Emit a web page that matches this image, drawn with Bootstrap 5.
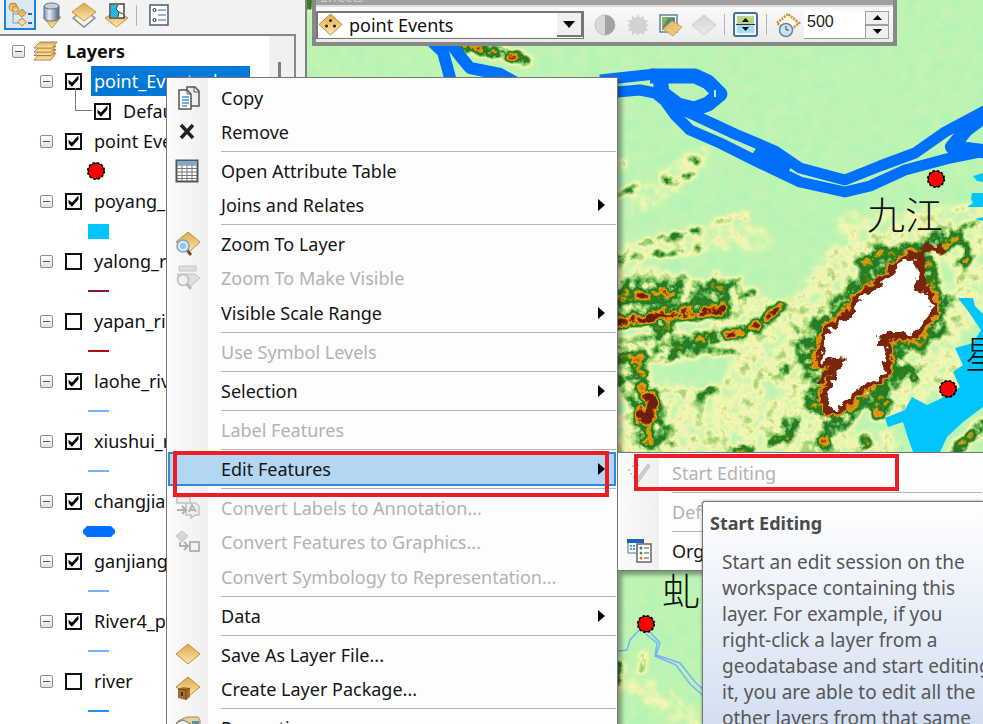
<!DOCTYPE html>
<html lang="en">
<head>
<meta charset="utf-8">
<meta name="viewport" content="width=device-width, initial-scale=1">
<title>Layers</title>
<link rel="stylesheet" href="https://cdn.jsdelivr.net/npm/bootstrap@5.3.0/dist/css/bootstrap.min.css">
<style>
  :root { --ui: "Noto Sans", "Open Sans", sans-serif; }
  body { font: 18px/30px var(--ui); color: #111; background: #f2f2f2; }
  svg { display: block; flex: none; }
  .side { width: 305px; flex: none; }
  .side-tools { height: 34px; padding: 0 0 4px 4px; }
  .tool { width: 33px; height: 30px; border: 0; padding: 0; background: none; display: flex; align-items: center; justify-content: center; flex: none; }
  .tool.on { background: #d9e8f7; border: 2px solid #1883d7; border-top: 0; }
  .side-tools .tool { width: 32px; }
  .rule { width: 1px; height: 21px; background: #b4b4b4; flex: none; }
  .toc { margin-right: 9px; border: 2px solid #828790; border-left: 0; border-bottom: 0; background: #fff; overflow: hidden; }
  .track { width: 25px; background: #f0f0f0; padding: 26px 0 0 9px; }
  .track span { display: block; width: 3px; height: 100%; background: #7d7d7d; }
  .tree li { height: 30px; display: flex; align-items: center; white-space: nowrap; }
  .tree .root { padding-left: 12px; }
  .lvl { padding-left: 40px; }
  .sub { padding-left: 75px; }
  .sym { padding-left: 88px; }
  .wide { margin-left: -5px; }
  .fold { width: 13px; height: 13px; border: 1px solid #8e8e8e; border-radius: 2px; background: linear-gradient(#fff, #e0e0e0); padding: 0; display: flex; align-items: center; justify-content: center; flex: none; }
  .fold::after { content: ""; width: 7px; height: 1px; background: #33509a; }
  .tick { appearance: none; width: 17px; height: 17px; border: 2px solid #111; background: #fff; margin: 0; flex: none; }
  .tick:checked::before { content: ""; display: block; width: 13px; height: 13px; background: #000; clip-path: polygon(12% 40%, 38% 62%, 88% 8%, 88% 38%, 38% 94%, 12% 68%); }
  .lvl .tick { margin: 0 12px 0 12px; }
  .sub .tick { margin: 0 12px 0 2px; }
  .lvl .picked { background: #0078d7; color: #fff; padding: 0 10px 0 3px; margin-left: -3px; width: 159px; }
  .elbow { width: 17px; height: 23px; border: solid #7a7a7a; border-width: 0 0 1px 1px; margin-top: -23px; flex: none; }
  .line { width: 21px; height: 2px; }
  .c-wine { background: #8c1448; } .c-red { background: #b40a14; } .c-sky { background: #73b2ff; } .c-blue { background: #1e96ff; }
  .mapview { border-left: 2px solid #808080; min-width: 0; }
  .map { width: 100%; height: 100%; }
  .effects { top: -15px; left: 5px; width: 585px; border: 4px solid #888; background: #a0a0a0; }
  .effects h2 { font: 14px/16px var(--ui); color: #d0d0d0; margin: 0; padding: 0 4px; height: 16px; }
  .effects-bar { background: linear-gradient(#fafafa, #ebebeb); height: 37px; border-top: 2px solid #ddd; }
  .well { border: solid #777; border-width: 2px 1px 1px 2px; background: #fff; width: 268px; height: 28px; flex: none; }
  .well select { appearance: none; border: 0; background: none; font: 18px/22px var(--ui); padding: 0 0 0 6px; min-width: 0; color: #111; }
  .arrow { width: 26px; height: 24px; background: #f0f0f0; border: solid #777; border-width: 0 2px 2px 0; }
  .amount { width: 61px; height: 28px; border: 0; border-bottom: 1px solid #999; padding: 0 0 4px 3px; font: 16px/20px "Liberation Sans", Arial, sans-serif; color: #222; }
  .spin { width: 24px; }
  .spin button { height: 14px; border: 1px solid #a0a0a0; background: #f0f0f0; padding: 0; display: flex; align-items: center; justify-content: center; }
  .menu { position: absolute; display: block; border: 1px solid #777; padding: 3px 1px 2px; color: #111;
    background: linear-gradient(90deg, #fcfcfc, #efefef 41px, #fdfdfd 41px); box-shadow: 4px 4px 4px rgba(0,0,0,.35); }
  .menu .item { height: 34px; width: 100%; border: 1px solid transparent; background: none; padding: 0 10px 0 6px; display: flex; align-items: center; color: #151515; text-align: left; white-space: nowrap; line-height: 32px; }
  .menu .item:disabled { color: #b3b3b3; }
  .menu .item.hot { background: #b3d6f2; border: 2px solid #2b8bdc; padding: 0 9px 0 5px; }
  .glyph { width: 26px; margin-right: 20px; flex: none; }
  .menu hr { margin: 2px 0 2px 53px; border: 0; border-top: 1px solid #b5b5b5; opacity: 1; }
  .trio { display: grid; gap: 1px; }
  .layer-menu { left: 166px; top: 77px; width: 452px; }
  .edit-menu { left: 617px; top: 452px; right: 0; border-right: 0; overflow: hidden; }
  .hint { left: 702px; top: 501px; right: 0; bottom: 0; border: 1px solid #767676; border-width: 1px 0 0 1px; border-radius: 3px 0 0 0; background: linear-gradient(#fff, #c9d8ee 270px); color: #575757; padding: 8px 0 0 7px; box-shadow: 0 0 3px rgba(0,0,0,.4); overflow: hidden; }
  .hint h3 { font: 700 18px/26px var(--ui); color: #4b4b4b; margin: 0 0 13px; }
  .hint p { font-size: 19px; line-height: 26px; padding-left: 12px; margin: 0; white-space: nowrap; }
  .callout { border: 4px solid #ee1c25; pointer-events: none; }
  .call-a { left: 173px; top: 451px; width: 436px; height: 46px; }
  .call-b { left: 634px; top: 454px; width: 265px; height: 37px; }
  .place { font-family: "Noto Sans CJK SC", sans-serif; font-weight: 300; font-size: 38px; fill: #111; }
</style>
</head>
<body class="overflow-hidden vh-100 position-relative">
<svg width="0" height="0" class="position-absolute" aria-hidden="true">
  <defs>
    <linearGradient id="gold" x1="0" y1="0" x2="0" y2="1"><stop offset="0" stop-color="#e0a84a"/><stop offset="1" stop-color="#fbe8b0"/></linearGradient>
    <linearGradient id="steel" x1="0" y1="0" x2="1" y2="0"><stop offset="0" stop-color="#7d8ca6"/><stop offset=".35" stop-color="#e6ecf5"/><stop offset="1" stop-color="#53617c"/></linearGradient>
    <linearGradient id="pale" x1="0" y1="0" x2="0" y2="1"><stop offset="0" stop-color="#d2d2d2"/><stop offset="1" stop-color="#ececec"/></linearGradient>
    <symbol id="pin" viewBox="0 0 20 20"><circle cx="10" cy="10" r="8.3" fill="#000" stroke="#000" stroke-width="1.6" stroke-dasharray="2.6 1.8"/><circle cx="10" cy="10" r="7.3" fill="#f00"/></symbol>
  </defs>
</svg>

<div class="d-flex h-100">
  <aside class="side d-flex flex-column">
    <div class="side-tools d-flex align-items-center">
      <button class="tool on" aria-label="List by drawing order"><svg width="28" height="28" viewBox="0 0 28 28"><path d="M7 10v13h8M7 14h8" fill="none" stroke="#999"/><g fill="url(#gold)" stroke="#b98a3d"><circle cx="7" cy="7" r="4"/><circle cx="9.500" cy="9" r="3"/><path d="M16 9l4.500 4-4.500 4-4.500-4zM16 18l4.500 4-4.500 4-4.500-4z"/></g><path d="M22 14h4M22 23h4" stroke="#33679f" stroke-width="2"/></svg></button>
      <button class="tool" aria-label="List by source"><svg width="22" height="27" viewBox="0 0 22 27"><path d="M2 15h18l-9 11z" fill="url(#gold)" stroke="#c49a52"/><path d="M3 4v12c0 4 15 4 15 0V4" fill="url(#steel)" stroke="#65718a"/><ellipse cx="10.500" cy="4" rx="7.500" ry="3" fill="#c4cede" stroke="#65718a"/></svg></button>
      <button class="tool" aria-label="List by visibility"><svg width="26" height="27" viewBox="0 0 26 27"><path d="M2 16l11-8 11 8-11 9z" fill="#f4f4f4" stroke="#8b8b8b" stroke-width="1.500"/><path d="M1 10l12-9 12 9-12 9z" fill="url(#gold)" stroke="#c0924a"/></svg></button>
      <button class="tool" aria-label="List by selection"><svg width="25" height="27" viewBox="0 0 25 27"><path d="M1 16l11.500-7L24 16l-11.500 9z" fill="url(#gold)" stroke="#c0924a"/><path d="M6 2h14v14H6z" fill="#fff" stroke="#444" stroke-width="1.500"/><path d="M7 3h7l-2 4 3 3-1 5H7z" fill="#1fb9e4"/><path d="M14 3l-2 4 3 3-1 5M15 10l4 2" fill="none" stroke="#444"/></svg></button>
      <span class="rule ms-1 me-2"></span>
      <button class="tool ms-1 w-auto" aria-label="Options"><svg width="20" height="22" viewBox="0 0 20 22"><path d="M1 1h18v20H1z" fill="#fff" stroke="#4d5a7c" stroke-width="1.500"/><circle cx="5.500" cy="6" r="1.500" fill="none" stroke="#222"/><circle cx="5.500" cy="16" r="1.500" fill="none" stroke="#222"/><path d="M9 6h8M9 11h8M9 16h8" stroke="#8490ad" stroke-width="1.500"/></svg></button>
    </div>
    <div class="toc d-flex flex-grow-1">
      <ul class="tree list-unstyled m-0 flex-grow-1 overflow-hidden">
        <li class="root fw-bold"><button class="fold" aria-label="Collapse"></button><svg class="ms-2 me-2" width="25" height="20" viewBox="0 0 25 20"><g fill="url(#gold)" stroke="#9c6c24" stroke-width=".8"><path d="M7 12h16l-5 7H1z"/><path d="M7 8.500h16l-5 6H1z"/><path d="M7 5h16l-5 6H1z"/><path d="M7 1h17l-5 6H1z"/></g></svg>Layers</li>
        <li class="lvl"><button class="fold" aria-label="Collapse"></button><input class="tick" type="checkbox" id="l1" checked><label class="picked" for="l1">point_Events dx</label></li>
        <li class="sub"><span class="elbow"></span><input class="tick" type="checkbox" id="l2" checked><label for="l2">Default</label></li>
        <li class="lvl"><button class="fold" aria-label="Collapse"></button><input class="tick" type="checkbox" id="l3" checked><label for="l3">point Events</label></li>
        <li class="sym"><svg width="20" height="20" viewBox="2 0 20 20" overflow="visible"><use href="#pin" width="20" height="20"/></svg></li>
        <li class="lvl"><button class="fold" aria-label="Collapse"></button><input class="tick" type="checkbox" id="l4" checked><label for="l4">poyang_lake</label></li>
        <li class="sym"><svg width="21" height="15"><rect width="21" height="15" fill="#00c5ff"/></svg></li>
        <li class="lvl"><button class="fold" aria-label="Collapse"></button><input class="tick" type="checkbox" id="l5"><label for="l5">yalong_river</label></li>
        <li class="sym"><span class="line c-wine"></span></li>
        <li class="lvl"><button class="fold" aria-label="Collapse"></button><input class="tick" type="checkbox" id="l6"><label for="l6">yapan_river</label></li>
        <li class="sym"><span class="line c-red"></span></li>
        <li class="lvl"><button class="fold" aria-label="Collapse"></button><input class="tick" type="checkbox" id="l7" checked><label for="l7">laohe_river</label></li>
        <li class="sym"><span class="line c-sky"></span></li>
        <li class="lvl"><button class="fold" aria-label="Collapse"></button><input class="tick" type="checkbox" id="l8" checked><label for="l8">xiushui_river</label></li>
        <li class="sym"><span class="line c-sky"></span></li>
        <li class="lvl"><button class="fold" aria-label="Collapse"></button><input class="tick" type="checkbox" id="l9" checked><label for="l9">changjiang</label></li>
        <li class="sym"><svg class="wide" width="32" height="11"><path d="M4 0h24l4 4v3l-4 4H4L0 7V4z" fill="#0070ff"/></svg></li>
        <li class="lvl"><button class="fold" aria-label="Collapse"></button><input class="tick" type="checkbox" id="l10" checked><label for="l10">ganjiang</label></li>
        <li class="sym"><span class="line c-sky"></span></li>
        <li class="lvl"><button class="fold" aria-label="Collapse"></button><input class="tick" type="checkbox" id="l11" checked><label for="l11">River4_polyline</label></li>
        <li class="sym"><span class="line c-sky"></span></li>
        <li class="lvl"><button class="fold" aria-label="Collapse"></button><input class="tick" type="checkbox" id="l12"><label for="l12">river</label></li>
        <li class="sym"><span class="line c-blue"></span></li>
      </ul>
      <div class="track"><span></span></div>
    </div>
  </aside>

  <main class="mapview flex-grow-1 position-relative overflow-hidden">
    <svg class="map" viewBox="307 0 676 724" preserveAspectRatio="xMinYMin slice" role="img" aria-label="Elevation map">
      <defs>
        <filter id="relief" filterUnits="userSpaceOnUse" x="307" y="0" width="676" height="724" color-interpolation-filters="sRGB">
          <feGaussianBlur in="SourceGraphic" stdDeviation="3" result="e"/>
          <feTurbulence type="fractalNoise" baseFrequency=".085" numOctaves="5" seed="8"/>
          <feColorMatrix values="1.900 0 0 0 -.45  1.900 0 0 0 -.45  1.900 0 0 0 -.45  0 0 0 0 1" result="n"/>
          <feComposite in="e" in2="n" operator="arithmetic" k1="1.100" k2=".5" k3=".03" k4=".01"/>
          <feComponentTransfer>
            <feFuncR type="table" tableValues=".68 .78 .97 .55 .12 .20 .88 .90 .55 .42 .42"/>
            <feFuncG type="table" tableValues=".96 .96 .97 .80 .48 .50 .64 .52 .18 .12 .12"/>
            <feFuncB type="table" tableValues=".72 .69 .70 .40 .16 .10 .06 .02 .02 .04 .08"/>
            <feFuncA type="linear" slope="0" intercept="1"/>
          </feComponentTransfer>
        </filter>
        <filter id="jag" filterUnits="userSpaceOnUse" x="780" y="230" width="203" height="200">
          <feTurbulence type="fractalNoise" baseFrequency=".13" numOctaves="2" seed="3"/>
          <feDisplacementMap in="SourceGraphic" scale="13" xChannelSelector="R" yChannelSelector="G"/>
        </filter>
        <path id="summit" d="M912 261L915 270 911 290 925 295 929 310 920 323 911 331 893 330 876 337 875 347 884 350 882 363 880 373 863 383 850 393 835 407 828 400 832 390 840 373 850 357 837 355 823 360 828 343 833 330 853 318 858 305 877 290 893 278 900 268z"/>
      </defs>
      <g filter="url(#relief)" fill="none" stroke-linecap="round" stroke-linejoin="round">
        <path d="M307 0h676v724H307z" fill="#080808" stroke="none"/>
        <g stroke="#1c1c1c" stroke-width="26"><path d="M617 260Q700 230 760 240M700 160L640 200M617 670L690 720M850 225L983 215"/></g>
        <path d="M617 280L760 320 740 400 617 440M680 400L700 450M720 440L800 410 790 330 850 260 960 230 975 270M940 330L975 290M890 400L940 360M800 450H880M960 390L930 350" stroke="#262626" stroke-width="44"/>
        <path d="M617 300L730 292M617 350L690 345M625 375L660 440" stroke="#444" stroke-width="28"/>
        <g stroke="#5c5c5c" stroke-width="7"><path d="M622 282L730 290M680 350L735 352M620 355L675 360M690 290l-8-14M712 290l4-16M730 290l8-10M740 300l16-8M796 330L805 375M800 420L770 445M925 240L975 225M770 375l20-8M700 395l15-6"/></g>
        <g stroke="#787878" stroke-width="4"><path d="M640 243L665 238 700 229M652 255L700 250M612 257L638 257M716 222L748 215M612 196L638 186M662 182L693 176M690 163L698 160M617 161L624 164M702 398L714 388M643 655v15"/></g>
        <g stroke="#8a8a8a" stroke-width="7"><path d="M617 665v16M866 440v8"/></g>
        <path d="M610 326Q650 313 725 311" stroke="#d4d4d4" stroke-width="11"/>
        <path d="M617 297L675 292M655 328L672 328" stroke="#b4b4b4" stroke-width="6"/>
        <path d="M698 338Q757 338 782 303" stroke="#a4a4a4" stroke-width="9"/>
        <path d="M636 365L650 395 646 440" stroke="#747474" stroke-width="18"/>
        <path d="M650 402L643 420" stroke="#e0e0e0" stroke-width="17"/>
        <g stroke="#505050" fill="#505050"><use href="#summit" stroke-width="48"/></g>
        <g stroke="#7c7c7c" fill="#7c7c7c"><use href="#summit" stroke-width="26"/></g>
        <path d="M862 262L880 250M920 255L955 240M965 250v14M912 372v4" stroke="#727272" stroke-width="12"/>
        <path d="M885 402L877 414M828 436L820 450M783 440L785 428" stroke="#8c8c8c" stroke-width="11"/>
        <path d="M983 425L955 452M735 452h15" stroke="#646464" stroke-width="13"/>
        <path d="M465 46L495 52 525 60" stroke="#909090" stroke-width="11"/>
        <path d="M307 0v6" stroke="#aaa" stroke-width="8"/>
      </g>
      <g filter="url(#jag)" stroke-linejoin="round">
        <use href="#summit" fill="none" stroke="#e08a10" stroke-width="21"/>
        <use href="#summit" fill="none" stroke="#7a2808" stroke-width="16"/>
        <path d="M912 258L928 248 945 250M922 250L924 290 936 316" fill="none" stroke="#7a2808" stroke-width="8"/>
        <use href="#summit" fill="#fff" stroke="#fff" stroke-width="5"/>
        <path d="M818 382L838 362" stroke="#7a2808" stroke-width="6"/>
      </g>
      <g fill="#00c5ff">
        <path d="M958 298h15l2 8 8 8v93l-20 15-16 15-7 15h-27l-5-14-5-16-15 5-3-9 20-8 7-13 15 8 11-5 22-13-7-15 10-7-8-17 18-5 8-13-13-19z"/>
        <path d="M983 173l-10 3 4 5 6 1zM983 193h-11l-1 6 2 4-6 4h16zM983 217l-8 2 8 2z"/>
      </g>
      <g fill="none" stroke="#0070ff" stroke-width="11" stroke-linejoin="round">
        <path d="M424 34L443 52 452 85" stroke-width="12"/>
        <path d="M448 40L460 56 470 68 500 74 520 85" stroke-width="12"/>
        <path d="M600 80L655 74"/>
        <path d="M650 76L695 76 708 82 720 94 708 104 694 109 678 105 662 93 660 78" stroke-width="15"/>
        <path d="M617 92L640 90 655 93 665 101 675 115 690 130 720 143 760 163 800 182 845 192 870 186 905 170 950 158 990 150"/>
        <path d="M670 104L692 114 735 134 775 151 800 168 845 180 880 166 915 153 945 132 990 108"/>
        <path d="M755 150L788 172" stroke-width="17"/>
        <path d="M990 112L966 130 952 147 990 152" stroke-width="14"/>
      </g>
      <path d="M715 90v7" stroke="#b4f5b0" stroke-width="2"/>
      <path d="M617 651L627 650 630 640 640 629M650 632L660 643 656 655 680 663 695 682 712 698M646 634L657 643 655 656 676 665 690 684 708 700" fill="none" stroke="#73b2ff" stroke-width="1.500"/>
      <use href="#pin" x="926" y="169" width="20" height="20"/>
      <use href="#pin" x="938" y="379" width="20" height="20"/>
      <use href="#pin" x="636" y="614" width="20" height="20"/>
      <text class="place" x="867" y="229">九江</text>
      <text class="place" x="965" y="368">星</text>
      <text class="place" x="662" y="605">虬</text>
    </svg>

    <section class="effects position-absolute">
      <h2>Effects</h2>
      <div class="effects-bar d-flex align-items-center">
        <div class="well d-flex align-items-center">
          <svg width="25" height="24" viewBox="0 0 25 24"><path d="M1 11.500L12.500 1 24 11.500 12.500 22z" fill="url(#gold)" stroke="#b88a43"/><g fill="#222"><circle cx="12.500" cy="7.500" r="1.500"/><circle cx="8.500" cy="13" r="1.500"/><circle cx="16.500" cy="13" r="1.500"/></g></svg>
          <select class="flex-grow-1" aria-label="Layer"><option>point Events</option></select>
          <span class="arrow d-flex align-items-center justify-content-center"><svg width="12" height="7"><path d="M0 0h12L6 7z"/></svg></span>
        </div>
        <button class="tool ms-1" aria-label="Contrast"><svg width="22" height="22" viewBox="0 0 22 22"><circle cx="11" cy="11" r="10" fill="#d9d9d9" stroke="#c4c4c4"/><path d="M11 1a10 10 0 010 20z" fill="#a3a3a3"/></svg></button>
        <button class="tool" aria-label="Brightness"><svg width="22" height="22" viewBox="0 0 22 22"><path fill="#d2d2d2" d="M11 0l2 4 4-2 0 4 4 0-2 4 3 1-3 2 2 4h-4v4l-4-2-2 3-2-3-4 2v-4H1l2-4-3-2 3-1-2-4h4V2l4 2z"/></svg></button>
        <button class="tool" aria-label="Transparency"><svg width="25" height="24" viewBox="0 0 25 24"><path d="M2 2h17v17H2z" fill="#fff" stroke="#62809e" stroke-width="1.500"/><path d="M4 4h13v13H4z" fill="#8fb05a"/><path d="M5 14l5-9h7v4l-9 8H4z" fill="#4a8a82"/><path d="M5 16L14 8l10 6-9 9z" fill="#f1c572" fill-opacity=".9" stroke="#d09b48"/></svg></button>
        <button class="tool" aria-label="Dim"><svg width="26" height="22" viewBox="0 0 26 22"><path d="M1 11L13 1l12 10-12 10z" fill="url(#pale)" stroke="#cdcdcd"/></svg></button>
        <span class="rule ms-1"></span>
        <button class="tool ms-1" aria-label="Swipe layer"><svg width="25" height="25" viewBox="0 0 25 25"><rect x="1" y="1" width="23" height="23" rx="2" fill="#eef6fb" stroke="#4a6f96" stroke-width="2"/><path d="M4 4h17v8H4z" fill="#bcd488"/><path d="M4 13h17v8H4z" fill="#a5dbf3"/><path d="M3 12.500h19" stroke="#333"/><path d="M9 10h7l-3.500-4zM9 15h7l-3.500 4z"/></svg></button>
        <span class="rule ms-1"></span>
        <button class="tool ms-1" aria-label="Flicker layer"><svg width="26" height="26" viewBox="0 0 26 26"><path d="M2 11L13 2l11 9-11 9z" fill="#fff8e4" stroke="#d09038" stroke-width="2.500" stroke-dasharray="2 1"/><circle cx="11" cy="18" r="6.500" fill="#c9e5f5" stroke="#6687a4" stroke-width="1.500"/><path d="M11 14v4h3" fill="none" stroke="#345"/></svg></button>
        <input class="amount" value="500" aria-label="Flicker rate">
        <div class="spin d-flex flex-column">
          <button aria-label="Increase"><svg width="9" height="5"><path d="M0 5h9L4.500 0z"/></svg></button>
          <button aria-label="Decrease"><svg width="9" height="5"><path d="M0 0h9L4.500 5z"/></svg></button>
        </div>
      </div>
    </section>
  </main>
</div>

<nav class="menu layer-menu" aria-label="Layer menu">
  <button class="item"><span class="glyph"><svg width="26" height="26" viewBox="0 0 26 26"><path d="M12 2h8l4 4v15H12z" fill="#eee" stroke="#555" stroke-width="1.500"/><path d="M19 2v5h5" fill="none" stroke="#555"/><path d="M4 5h8l4 4v15H4z" fill="#fff" stroke="#555" stroke-width="1.500"/><path d="M12 5v4h4" fill="none" stroke="#555"/><path d="M7 12h7M7 15h7M7 18h7M7 21h5" stroke="#4a90d6" stroke-width="1.500"/></svg></span>Copy</button>
  <button class="item"><span class="glyph"><svg width="26" height="26" viewBox="0 0 26 26"><path d="M6 6l12 13M18 6L6 19" stroke="#222" stroke-width="3.500"/></svg></span>Remove</button>
  <hr>
  <button class="item"><span class="glyph"><svg width="24" height="24" viewBox="0 0 24 24"><path d="M1.500 1.500h21v21h-21z" fill="#fff" stroke="#555" stroke-width="2"/><path d="M2.500 2.500h19v3h-19z" fill="#62b1ea"/><path d="M2 6h20M2 9.500h20M2 13h20M2 16.500h20M2 19.500h20M7 6v16M12 6v16M17 6v16" stroke="#777"/></svg></span>Open Attribute Table</button>
  <button class="item"><span class="glyph"></span>Joins and Relates<svg class="ms-auto" width="7" height="12"><path d="M0 0l7 6-7 6z"/></svg></button>
  <hr>
  <button class="item"><span class="glyph"><svg width="26" height="26" viewBox="0 0 26 26"><path d="M1 11L13 1l12 10-11 10z" fill="url(#gold)" stroke="#c18c3c"/><path d="M12 19l4 5" stroke="#7c4b31" stroke-width="3"/><circle cx="8" cy="15" r="6" fill="#d3ebfb" stroke="#7ba3cc" stroke-width="1.500"/><circle cx="8" cy="15" r="3" fill="#8ec4ef"/></svg></span>Zoom To Layer</button>
  <div class="trio">
  <button class="item" disabled><span class="glyph"><svg width="26" height="26" viewBox="0 0 26 26"><path d="M4 1h17v5H4zM2 9h18l5 4-10 9z" fill="#dedede" stroke="#c4c4c4"/><path d="M12 19l4 5" stroke="#bbb" stroke-width="3"/><circle cx="8" cy="15" r="5.500" fill="#f0f0f0" stroke="#bcbcbc" stroke-width="1.500"/></svg></span>Zoom To Make Visible</button>
  <button class="item"><span class="glyph"></span>Visible Scale Range<svg class="ms-auto" width="7" height="12"><path d="M0 0l7 6-7 6z"/></svg></button>
  </div>
  <hr>
  <button class="item" disabled><span class="glyph"></span>Use Symbol Levels</button>
  <hr>
  <button class="item"><span class="glyph"></span>Selection<svg class="ms-auto" width="7" height="12"><path d="M0 0l7 6-7 6z"/></svg></button>
  <hr>
  <button class="item" disabled><span class="glyph"></span>Label Features</button>
  <hr>
  <button class="item hot"><span class="glyph"></span>Edit Features<svg class="ms-auto" width="7" height="12"><path d="M0 0l7 6-7 6z"/></svg></button>
  <hr>
  <button class="item" disabled><span class="glyph"><svg width="26" height="26" viewBox="0 0 26 26"><path d="M2 2h13v6H2zM11 8h9l4 3v9h-4l-4 3v-3h-5z" fill="#eee" stroke="#c2c2c2" stroke-width="1.500"/><path d="M2 15h8M7 11l4 4-4 4" fill="none" stroke="#b0b0b0" stroke-width="2"/><path d="M14 17l3-7 4 7M15 15h5" fill="none" stroke="#aaa" stroke-width="1.500"/></svg></span>Convert Labels to Annotation...</button>
  <div class="trio">
  <button class="item" disabled><span class="glyph"><svg width="26" height="26" viewBox="0 0 26 26"><path d="M1 7l6-5 6 5-6 6z" fill="#d8d8d8" stroke="#c4c4c4"/><path d="M5 13v4h7M9 13l4 4-4 4" fill="none" stroke="#b0b0b0" stroke-width="2"/><path d="M15 13h9v9h-9z" fill="#f2f2f2" stroke="#b5b5b5" stroke-width="2"/></svg></span>Convert Features to Graphics...</button>
  <button class="item" disabled><span class="glyph"></span>Convert Symbology to Representation...</button>
  </div>
  <hr>
  <button class="item"><span class="glyph"></span>Data<svg class="ms-auto" width="7" height="12"><path d="M0 0l7 6-7 6z"/></svg></button>
  <hr>
  <button class="item"><span class="glyph"><svg width="26" height="26" viewBox="0 0 26 26"><path d="M1 12L13 2l12 10-12 10z" fill="url(#gold)" stroke="#c18c3c"/></svg></span>Save As Layer File...</button>
  <button class="item"><span class="glyph"><svg width="26" height="26" viewBox="0 0 26 26"><path d="M1 11L13 1l12 10-12 10z" fill="url(#gold)" stroke="#c18c3c"/><path d="M3 13l5-2 7 1v9l-4 3-8-2z" fill="#a7702a"/><path d="M3 13l8 1 4-2M11 14v10" fill="none" stroke="#6d441a"/><path d="M6 16h2v4H6z" fill="#4c2d10"/></svg></span>Create Layer Package...</button>
  <hr>
  <button class="item"><span class="glyph"><svg width="26" height="26" viewBox="0 0 26 26"><path d="M3 6l9-4h11l2 3v18H3z" fill="#e8cf95" stroke="#a18a5a"/><path d="M1 8l7-3 8 4-6 5z" fill="#edf1f2" stroke="#777"/><path d="M17 6h7v16h-7z" fill="#5f8f9f"/></svg></span>Properties...</button>
</nav>

<nav class="menu edit-menu" aria-label="Edit Features">
  <button class="item" disabled><span class="glyph"><svg width="26" height="26" viewBox="0 0 26 26"><path d="M9 21L22 4l2 2-12 17z" fill="#d0d0d0" stroke="#bdbdbd"/><path d="M2 10h2M6 6h2M8 10h2M4 14h2M10 13h2M7 17h2M11 5h2" stroke="#c9c9c9" stroke-width="2"/></svg></span>Start Editing</button>
  <hr>
  <button class="item" disabled><span class="glyph"></span>Define New Types Of Features...</button>
  <hr>
  <button class="item"><span class="glyph"><svg width="26" height="26" viewBox="0 0 26 26"><path d="M2 2h15v13H2z" fill="#fff" stroke="#577"/><path d="M1 1h17v4H1z" fill="#1766b8"/><path d="M4 8h12M4 11h12" stroke="#5d9ed8" stroke-width="2" stroke-dasharray="2 1"/><path d="M11 6h14v18H11z" fill="#fff" stroke="#666" stroke-width="1.500"/><circle cx="15" cy="10" r="1.500" fill="#2676c4"/><circle cx="15" cy="15" r="1.500" fill="#2d9a35"/><circle cx="15" cy="20" r="1.500" fill="#d57a18"/><path d="M18 10h5M18 15h5M18 20h5" stroke="#888" stroke-width="1.500"/></svg></span>Organize Feature Templates...</button>
</nav>

<div class="hint position-absolute" role="tooltip">
  <h3>Start Editing</h3>
  <p>Start an edit session on the<br>workspace containing this<br>layer. For example, if you<br>right-click a layer from a<br>geodatabase and start editing<br>it, you are able to edit all the<br>other layers from that same</p>
</div>
<div class="callout call-a position-absolute"></div>
<div class="callout call-b position-absolute"></div>
<script src="https://cdn.jsdelivr.net/npm/bootstrap@5.3.0/dist/js/bootstrap.bundle.min.js"></script>
</body>
</html>
